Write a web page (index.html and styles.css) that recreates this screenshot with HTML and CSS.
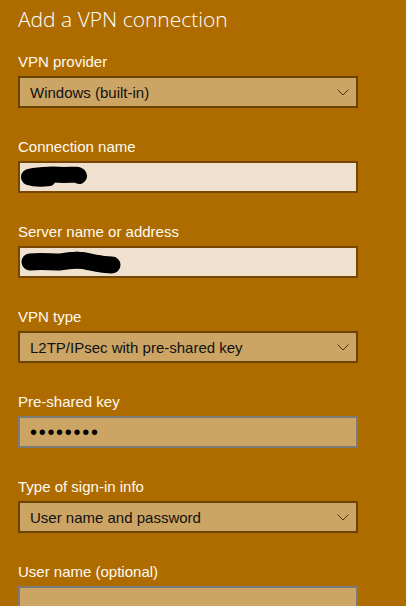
FILE: index.html
```html
<!DOCTYPE html>
<html>
<head>
<meta charset="utf-8">
<link rel="stylesheet" href="styles.css">
</head>
<body>
<div class="page">
  <h1 class="title">Add a VPN connection</h1>

  <div class="field">
    <div class="label">VPN provider</div>
    <div class="box select">
      <span class="value">Windows (built-in)</span>
      <svg class="chev" width="12" height="7" viewBox="0 0 12 7"><path d="M0.5 0.5 L6 6 L11.5 0.5" fill="none" stroke="#4a3310" stroke-width="1"/></svg>
    </div>
  </div>

  <div class="field">
    <div class="label">Connection name</div>
    <div class="box text">
      <svg class="blob" width="70" height="24" viewBox="0 0 70 24"><path d="M9 12 C14 10 30 9 44 10 C52 10 58 9 59 11" fill="none" stroke="#000" stroke-width="16" stroke-linecap="round"/><path d="M8 15 C14 17 22 17 30 16" fill="none" stroke="#000" stroke-width="10" stroke-linecap="round"/></svg>
    </div>
  </div>

  <div class="field">
    <div class="label">Server name or address</div>
    <div class="box text">
      <svg class="blob" width="104" height="24" viewBox="0 0 104 24"><path d="M10 12 C20 11 30 12 40 12 C50 10 60 9 70 12 C80 14 90 15 92 15" fill="none" stroke="#000" stroke-width="17" stroke-linecap="round"/><path d="M45 8 C52 5 62 5 68 8" fill="none" stroke="#000" stroke-width="8" stroke-linecap="round"/></svg>
    </div>
  </div>

  <div class="field">
    <div class="label">VPN type</div>
    <div class="box select">
      <span class="value">L2TP/IPsec with pre-shared key</span>
      <svg class="chev" width="12" height="7" viewBox="0 0 12 7"><path d="M0.5 0.5 L6 6 L11.5 0.5" fill="none" stroke="#4a3310" stroke-width="1"/></svg>
    </div>
  </div>

  <div class="field">
    <div class="label">Pre-shared key</div>
    <div class="box plain">
      <span class="dots">••••••••</span>
    </div>
  </div>

  <div class="field">
    <div class="label">Type of sign-in info</div>
    <div class="box select">
      <span class="value">User name and password</span>
      <svg class="chev" width="12" height="7" viewBox="0 0 12 7"><path d="M0.5 0.5 L6 6 L11.5 0.5" fill="none" stroke="#4a3310" stroke-width="1"/></svg>
    </div>
  </div>

  <div class="field">
    <div class="label">User name (optional)</div>
    <div class="box plain"></div>
  </div>
</div>
</body>
</html>
```

FILE: styles.css
```css
html, body {
  margin: 0;
  padding: 0;
  background: #ae6c00;
  height: 100%;
  overflow: hidden;
}
.page {
  padding: 4px 0 0 18px;
  width: 340px;
  font-family: "Liberation Sans", Arial, sans-serif;
}
.title {
  margin: 0 0 18px 0;
  font-family: "Open Sans", "Noto Sans", sans-serif;
  font-weight: 300;
  font-size: 21px;
  line-height: 30px;
  color: #ffffff;
  white-space: nowrap;
}
.field {
  margin-bottom: 29px;
}
.label {
  color: #fffaf0;
  font-size: 15px;
  line-height: 20px;
  margin-bottom: 4px;
}
.box {
  box-sizing: border-box;
  height: 32px;
  width: 340px;
  border: 2px solid #6b4300;
  display: flex;
  align-items: center;
  padding: 0 7px 0 10px;
}
.select {
  background: #cca565;
  justify-content: space-between;
}
.text {
  background: #efe1cd;
  padding-left: 0;
  border-color: #744800;
}
.plain {
  background: #cca565;
  border-color: #7d7b78;
}
.value {
  font-size: 15px;
  color: #111;
}
.chev {
  display: block;
}
.blob {
  display: block;
}
.dots {
  font-size: 20px;
  letter-spacing: 1.7px;
  color: #000;
  padding-left: 0;
}
```
